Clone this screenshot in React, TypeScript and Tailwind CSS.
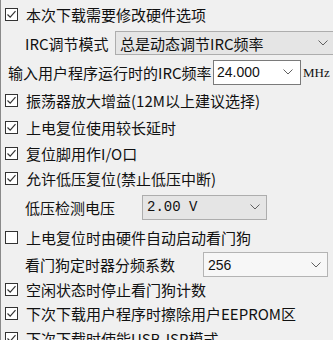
import React from "react";

const font = { fontFamily: '"Noto Sans CJK SC", "Noto Sans", sans-serif' };

function Check({ checked }: { checked: boolean }) {
  return (
    <span className="w-[13px] h-[13px] border border-[#333333] bg-white flex items-center justify-center shrink-0">
      {checked && (
        <svg width="11" height="11" viewBox="0 0 11 11">
          <path d="M1.5 5.5 L4.2 8.2 L9.5 2.2" fill="none" stroke="#333333" strokeWidth="1.2" />
        </svg>
      )}
    </span>
  );
}

function Chevron() {
  return (
    <svg width="10" height="6" viewBox="0 0 10 6" className="shrink-0">
      <path d="M0.5 0.5 L5 5 L9.5 0.5" fill="none" stroke="#606060" strokeWidth="1" />
    </svg>
  );
}

function CheckRow({ label, checked, h }: { label: string; checked: boolean; h: string }) {
  return (
    <div className={`flex items-center pl-[4px] ${h}`}>
      <Check checked={checked} />
      <span className="ml-[8px] whitespace-nowrap">{label}</span>
    </div>
  );
}

export default function App() {
  return (
    <div className="w-[333px] h-[340px] overflow-hidden bg-[#f0f0f0] border-l border-[#8a8a8a] text-[15px] leading-none text-[#111111]" style={font}>
      <CheckRow label="本次下载需要修改硬件选项" checked h="h-[28px]" />

      <div className="flex items-center h-[30px] pl-[24px]">
        <span className="w-[90px] whitespace-nowrap">IRC调节模式</span>
        <div className="ml-[0px] flex-1 h-[24px] flex items-center justify-between bg-[#e5e5e5] border border-[#adadad] pl-[4px] pr-[8px] mr-[-4px]">
          <span className="whitespace-nowrap">总是动态调节IRC频率</span>
          <Chevron />
        </div>
      </div>

      <div className="flex items-center h-[28px] pl-[7px]">
        <span className="w-[205px] whitespace-nowrap">输入用户程序运行时的IRC频率</span>
        <div className="w-[88px] h-[25px] flex items-center justify-between bg-white border border-[#7a7a7a] pl-[3px] pr-[7px]">
          <span className="whitespace-nowrap" style={{ fontFamily: '"Liberation Sans", sans-serif', fontSize: 14 }}>24.000</span>
          <Chevron />
        </div>
        <span className="ml-[2px] text-[13px]" style={{ fontFamily: '"Liberation Serif", serif' }}>MHz</span>
      </div>

      <CheckRow label="振荡器放大增益(12M以上建议选择)" checked h="h-[28px]" />
      <CheckRow label="上电复位使用较长延时" checked h="h-[27px]" />
      <CheckRow label="复位脚用作I/O口" checked h="h-[25px]" />
      <CheckRow label="允许低压复位(禁止低压中断)" checked h="h-[25px]" />

      <div className="flex items-center h-[32px] pl-[24px]">
        <span className="w-[117px] whitespace-nowrap">低压检测电压</span>
        <div className="w-[125px] h-[25px] flex items-center justify-between bg-[#e5e5e5] border border-[#adadad] pl-[4px] pr-[6px]">
          <span className="whitespace-nowrap" style={{ fontFamily: '"Liberation Mono", monospace', fontSize: 14 }}>2.00 V</span>
          <Chevron />
        </div>
      </div>

      <CheckRow label="上电复位时由硬件自动启动看门狗" checked={false} h="h-[29px]" />

      <div className="flex items-center h-[25px] pl-[24px]">
        <span className="w-[178px] whitespace-nowrap">看门狗定时器分频系数</span>
        <div className="w-[125px] h-[25px] flex items-center justify-between bg-[#f7f7f7] border border-[#b4b4b4] pl-[4px] pr-[6px]">
          <span className="whitespace-nowrap" style={{ fontFamily: '"Liberation Sans", sans-serif', fontSize: 14 }}>256</span>
          <Chevron />
        </div>
      </div>

      <CheckRow label="空闲状态时停止看门狗计数" checked h="h-[24px]" />
      <CheckRow label="下次下载用户程序时擦除用户EEPROM区" checked h="h-[25px]" />
      <CheckRow label="下次下载时使能USB-ISP模式" checked h="h-[24px]" />
    </div>
  );
}
